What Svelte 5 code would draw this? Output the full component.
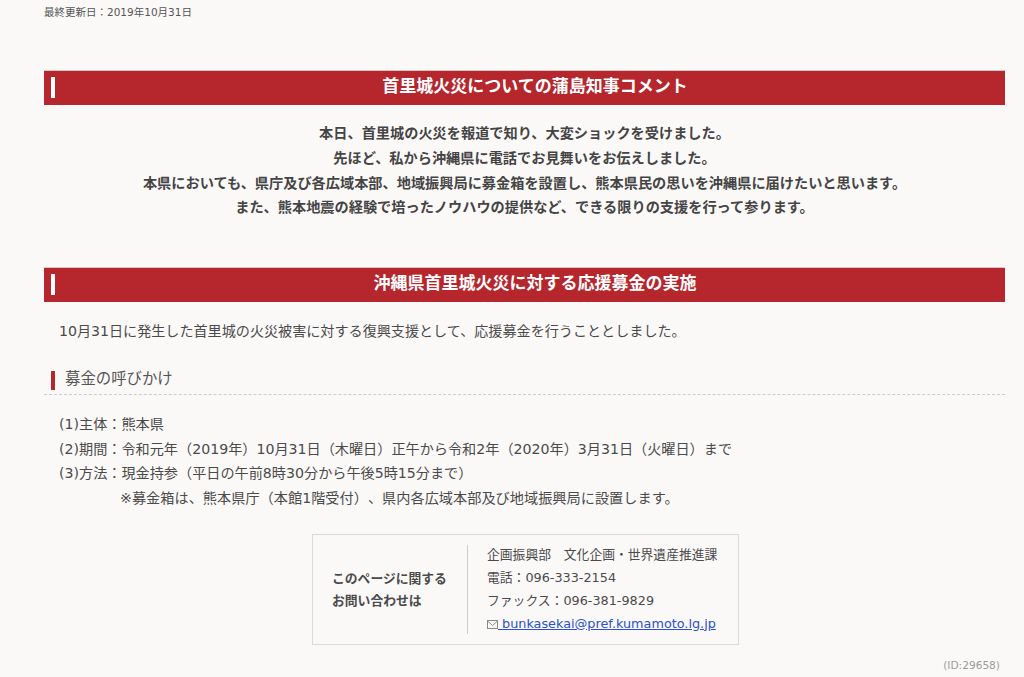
<script>
  const comment_lines = [
    '本日、首里城の火災を報道で知り、大変ショックを受けました。',
    '先ほど、私から沖縄県に電話でお見舞いをお伝えしました。',
    '本県においても、県庁及び各広域本部、地域振興局に募金箱を設置し、熊本県民の思いを沖縄県に届けたいと思います。',
    'また、熊本地震の経験で培ったノウハウの提供など、できる限りの支援を行って参ります。'
  ];
  const call_lines = [
    '(1)主体：熊本県',
    '(2)期間：令和元年（2019年）10月31日（木曜日）正午から令和2年（2020年）3月31日（火曜日）まで',
    '(3)方法：現金持参（平日の午前8時30分から午後5時15分まで）'
  ];
</script>

<main class="page">
  <p class="updated">最終更新日：2019年10月31日</p>

  <h2 class="first">首里城火災についての蒲島知事コメント</h2>
  <div class="comment">
    {#each comment_lines as line}
      <p>{line}</p>
    {/each}
  </div>

  <h2 class="second">沖縄県首里城火災に対する応援募金の実施</h2>
  <p class="lead">10月31日に発生した首里城の火災被害に対する復興支援として、応援募金を行うこととしました。</p>

  <h3>募金の呼びかけ</h3>
  <div class="call">
    {#each call_lines as line}
      <p>{line}</p>
    {/each}
    <p class="note">※募金箱は、熊本県庁（本館1階受付）、県内各広域本部及び地域振興局に設置します。</p>
  </div>

  <section class="contact">
    <div class="contact-title">このページに関する<br>お問い合わせは</div>
    <div class="contact-body">
      <p>企画振興部　文化企画・世界遺産推進課</p>
      <p>電話：096-333-2154</p>
      <p>ファックス：096-381-9829</p>
      <p>
        <svg class="mail" viewBox="0 0 11 9" width="11" height="9" aria-hidden="true">
          <rect x="0.5" y="0.5" width="10" height="8" fill="none" stroke="#888" />
          <path d="M0.5 1 L5.5 5.5 L10.5 1" fill="none" stroke="#888" />
        </svg><a href="#top">&nbsp;bunkasekai@pref.kumamoto.lg.jp</a>
      </p>
    </div>
  </section>

  <p class="page-id">(ID:29658)</p>
</main>

<style>
  :global(body) {
    margin: 0;
    background: #fbf9f8;
  }

  .page {
    height: 677px;
    overflow: hidden;
    box-sizing: border-box;
    padding: 0 19px 0 44px;
    color: #4a4a4a;
    font-family: "DejaVu Sans", "Noto Sans CJK JP", sans-serif;
    font-size: 14.15px;
    line-height: 24.75px;
    text-spacing-trim: space-all;
  }

  p {
    margin: 0;
  }

  .updated {
    padding-top: 5px;
    font-size: 10.5px;
    line-height: 14px;
    color: #555;
  }

  h2 {
    position: relative;
    margin: 0;
    height: 35px;
    padding-left: 21px;
    background: #b5262d;
    color: #fff;
    font-size: 17px;
    font-weight: bold;
    line-height: 31px;
    text-align: center;
    border-top: 1px solid #ddc4c4;
    box-sizing: border-box;
  }

  h2::before {
    content: "";
    position: absolute;
    left: 7px;
    top: 6px;
    width: 4px;
    height: 21px;
    background: #fff;
  }

  h2.first {
    margin-top: 51px;
  }

  h2.second {
    margin-top: 47px;
  }

  .comment {
    margin-top: 16px;
    text-align: center;
    font-weight: bold;
    font-size: 14.2px;
    color: #444;
  }

  .lead {
    margin-top: 17px;
    padding-left: 15px;
    font-size: 14.1px;
  }

  h3 {
    margin: 23px 0 0;
    height: 27px;
    padding-left: 21px;
    position: relative;
    font-size: 15.4px;
    font-weight: normal;
    line-height: 24px;
    color: #555;
    border-bottom: 1px dashed #ccc;
  }

  h3::before {
    content: "";
    position: absolute;
    left: 7px;
    top: 4px;
    width: 4px;
    height: 19px;
    background: #b5262d;
  }

  .call {
    margin-top: 17px;
    padding-left: 15px;
  }

  .note {
    padding-left: 61px;
    font-size: 14.2px;
  }

  .contact {
    display: flex;
    align-items: center;
    width: 427px;
    height: 111px;
    box-sizing: border-box;
    margin: 23px 0 0 268px;
    padding: 10px 0;
    border: 1px solid #d9d9d9;
  }

  .contact-title {
    width: 154px;
    padding: 2px 0 0 19px;
    box-sizing: border-box;
    font-size: 12.8px;
    font-weight: bold;
    line-height: 22px;
  }

  .contact-body {
    border-left: 1px solid #ccc;
    padding-left: 19px;
    font-size: 12.8px;
    line-height: 23px;
    height: 89px;
  }

  .contact-body p:first-child {
    margin-top: -2px;
  }

  .mail {
    vertical-align: -1px;
  }

  a {
    color: #2a4fcf;
  }

  .page-id {
    margin-top: 14px;
    padding-right: 5px;
    text-align: right;
    font-size: 10.6px;
    line-height: 12px;
    color: #999;
  }
</style>
